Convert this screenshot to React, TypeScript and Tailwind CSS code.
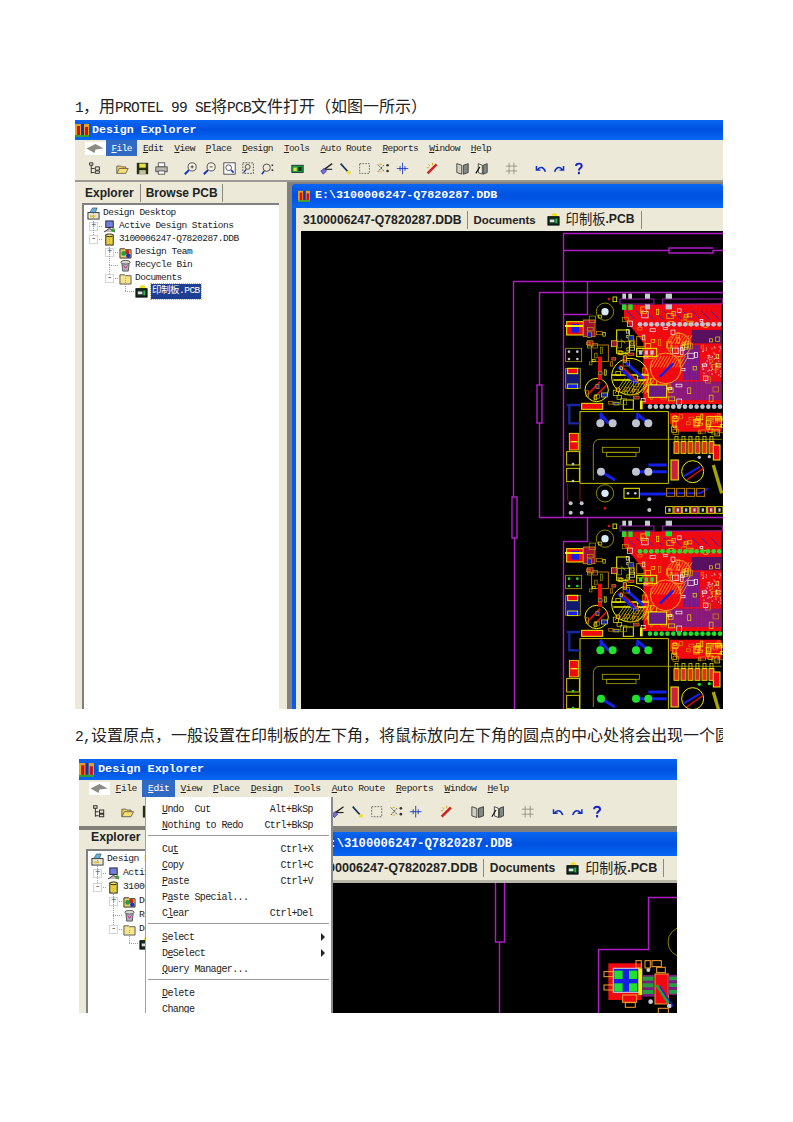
import type { ReactNode } from 'react';

const mono = "font-['Liberation_Mono','Noto_Sans_CJK_SC',monospace]";
const sans = "font-['Liberation_Sans','Noto_Sans_CJK_SC',sans-serif]";

// seeded so both boards come out the same on every run
function scatter(seed: number, n: number, x0: number, y0: number, w: number, h: number) {
  let s = seed;
  const next = () => {
    s = (s * 9301 + 49297) % 233280;
    return s / 233280;
  };
  return Array.from({ length: n }, () => ({
    x: x0 + next() * w,
    y: y0 + next() * h,
    w: 6 + next() * 14,
    h: 6 + next() * 14,
  }));
}

const range = (n: number) => Array.from({ length: n }, (_, i) => i);

const YEL = '#f4f000';
const OLV = '#a8a400';
const PUR = '#9a1fb0';
const BLU = '#1420e8';
const RED = '#f00a10';
const MAG = '#b01cc8';

function Board({ pad }: { pad: string }) {
  return (
    <g fill="none">
      {/* copper pours */}
      <path fill={RED} d="M372 75 L665 70 L665 372 L430 372 L430 190 L405 155 L372 118Z" />
      <path fill={RED} d="M510 398 L665 398 L665 455 L530 455 L510 430Z" />
      <rect x="575" y="150" width="90" height="40" fill="#5a1060" />
      <rect x="550" y="195" width="50" height="105" fill="#7a1a80" />
      <rect x="510" y="305" width="155" height="55" fill="#8a1a70" />
      <rect x="600" y="195" width="65" height="95" fill={RED} />
      {range(30).map((i) => (
        <line key={i} x1={500 + i * 5} y1={235} x2={500 + i * 5} y2={362} stroke={PUR} strokeWidth="1.6" opacity={i % 3 === 0 ? 0.8 : 0.35} />
      ))}
      {range(10).map((i) => (
        <line key={i} x1={380 + i * 28} y1={92} x2={405 + i * 28} y2={118} stroke={BLU} strokeWidth="2.5" />
      ))}
      {scatter(7, 90, 375, 80, 285, 280).map((r, i) => (
        <rect key={i} x={r.x} y={r.y} width={r.w} height={r.h} stroke={i % 3 === 0 ? '#e8e000' : i % 3 === 1 ? '#d89000' : '#ffffff'} strokeWidth="2" />
      ))}
      {scatter(13, 60, 605, 200, 58, 90).map((r, i) => (
        <path key={i} d={`M${r.x - 2} ${r.y}h4M${r.x} ${r.y - 2}v4`} stroke="#ffffff" strokeWidth="1.2" />
      ))}
      {scatter(21, 34, 515, 400, 150, 55).map((r, i) => (
        <rect key={i} x={r.x} y={r.y} width={r.w} height={r.h} stroke={i % 2 ? YEL : '#d89000'} strokeWidth="2" />
      ))}
      {/* pad rows */}
      {range(15).map((i) => (
        <circle key={i} cx={420 + i * 17} cy={133} r="7" fill={pad} />
      ))}
      {range(13).map((i) => (
        <circle key={i} cx={450 + i * 17.5} cy={380} r="7" fill={pad} />
      ))}
      {/* top connector */}
      <rect x="360" y="57" width="102" height="15" stroke={PUR} strokeWidth="3" />
      <rect x="488" y="57" width="180" height="15" stroke={PUR} strokeWidth="3" />
      <rect x="367" y="41" width="11" height="15" fill="#c8ccd4" />
      <rect x="385" y="41" width="11" height="15" fill="#c8ccd4" />
      <rect x="435" y="41" width="15" height="15" fill="#c8ccd4" />
      <rect x="497" y="41" width="19" height="15" fill="#c8ccd4" />
      <rect x="366" y="73" width="13" height="17" fill="#22dd33" />
      <rect x="385" y="73" width="13" height="17" fill="#22dd33" />
      <rect x="435" y="73" width="15" height="15" fill={pad} />
      <rect x="497" y="73" width="19" height="15" fill={pad} />
      <circle cx="327" cy="57" r="4" fill={RED} />
      <rect x="339" y="51" width="11" height="14" stroke={YEL} strokeWidth="2.5" />
      {/* mounting holes */}
      <circle cx="315" cy="95" r="26" stroke={OLV} strokeWidth="2.5" />
      <circle cx="315" cy="95" r="11" fill="#d8ecf4" />
      <circle cx="315" cy="640" r="26" stroke={OLV} strokeWidth="2.5" />
      <circle cx="315" cy="640" r="11" fill="#d8ecf4" />
      <circle cx="315" cy="685" r="4" fill={RED} />
      {/* capacitors */}
      <circle cx="390" cy="290" r="55" stroke={YEL} strokeWidth="3" />
      <path d="M335 285 H445 M340 300 H440" stroke={YEL} strokeWidth="4" />
      {range(11).map((i) => (
        <line key={i} x1={345 + i * 9} y1={340} x2={375 + i * 9} y2={295} stroke={YEL} strokeWidth="2" />
      ))}
      <path d="M355 260 L410 310 M375 245 L430 295" stroke={BLU} strokeWidth="9" />
      <path d="M360 255 L415 305" stroke={RED} strokeWidth="4" />
      <circle cx="497" cy="265" r="46" fill={RED} stroke="#f8a030" strokeWidth="3" />
      {range(11).map((i) => (
        <line key={i} x1={455 + i * 9} y1={262} x2={475 + i * 9} y2={228} stroke="#f8a030" strokeWidth="2.5" />
      ))}
      <path d="M480 290 L520 250" stroke={BLU} strokeWidth="7" />
      <circle cx="537" cy="195" r="35" stroke="#f8a030" strokeWidth="3" />
      {range(7).map((i) => (
        <line key={i} x1={507 + i * 9} y1={192} x2={522 + i * 9} y2={166} stroke="#f8a030" strokeWidth="2.5" />
      ))}
      <circle cx="290" cy="330" r="35" stroke={YEL} strokeWidth="3" />
      <path d="M262 345 L300 305 M280 355 L320 315" stroke={RED} strokeWidth="5" />
      <circle cx="578" cy="575" r="33" stroke={YEL} strokeWidth="3" />
      <path d="M550 590 L600 560" stroke={BLU} strokeWidth="6" />
      <path d="M560 600 L610 565" stroke={RED} strokeWidth="4" />
      {/* relay block */}
      <path d="M300 400 L325 430 M305 400 L300 430 M410 400 L445 430 M415 400 L408 430 M345 600 L303 575 M408 575 H500 M445 555 H500 M420 642 H500" stroke={BLU} strokeWidth="9" />
      <rect x="240" y="395" width="265" height="215" stroke={YEL} strokeWidth="2.5" />
      <path d="M280 600 V500 Q280 478 300 478 H665 M300 478" stroke={OLV} strokeWidth="2.5" />
      <rect x="307" y="502" width="111" height="15" stroke={OLV} strokeWidth="2.5" />
      <rect x="320" y="517" width="88" height="13" stroke={OLV} strokeWidth="2.5" />
      {[[301, 430], [338, 430], [408, 430], [445, 430], [303, 575], [408, 575], [445, 575]].map(([cx, cy], i) => (
        <circle key={i} cx={cx} cy={cy} r="12" fill={pad} />
      ))}
      {/* small parts down the left edge */}
      <rect x="200" y="125" width="50" height="40" fill={RED} stroke={YEL} strokeWidth="3" />
      <rect x="215" y="132" width="22" height="26" fill={BLU} />
      <rect x="195" y="135" width="60" height="6" fill={YEL} />
      <rect x="250" y="120" width="35" height="50" fill="#a01030" stroke="#d89000" strokeWidth="2.5" />
      <rect x="197" y="205" width="48" height="40" stroke={OLV} strokeWidth="2.5" />
      {[[207, 215], [232, 215], [207, 237], [232, 237]].map(([cx, cy], i) => (
        <circle key={i} cx={cx} cy={cy} r="4" fill={pad} />
      ))}
      <rect x="197" y="265" width="44" height="60" stroke={OLV} strokeWidth="2.5" fill="#101870" />
      <rect x="203" y="265" width="30" height="16" fill={RED} stroke={YEL} strokeWidth="3" />
      <rect x="203" y="312" width="30" height="14" fill={BLU} stroke={YEL} strokeWidth="2.5" />
      <rect x="275" y="195" width="50" height="50" stroke="#d89000" strokeWidth="2.5" />
      <path d="M300 230 V300" stroke={RED} strokeWidth="12" />
      <rect x="350" y="150" width="38" height="70" stroke={YEL} strokeWidth="3" />
      <path d="M350 184 H388 M362 178 L376 190" stroke={YEL} strokeWidth="2" />
      <rect x="410" y="205" width="60" height="25" stroke={YEL} strokeWidth="3" />
      {range(3).map((i) => (
        <rect key={i} x={417 + i * 17} y={211} width="10" height="13" fill={pad} />
      ))}
      <rect x="410" y="170" width="25" height="30" stroke="#d89000" strokeWidth="2.5" />
      <path d="M208 375 V430 H240 M200 375 H240" stroke="#1828a0" strokeWidth="7" />
      <rect x="245" y="370" width="63" height="18" fill={RED} stroke={YEL} strokeWidth="3" />
      <rect x="370" y="360" width="30" height="28" stroke={YEL} strokeWidth="3" />
      <rect x="420" y="362" width="8" height="26" fill={YEL} />
      <rect x="445" y="315" width="55" height="37" stroke={YEL} strokeWidth="3" fill="#6a1a80" />
      <rect x="208" y="460" width="27" height="50" fill={RED} stroke={YEL} strokeWidth="2.5" />
      <path d="M212 485 H232" stroke={YEL} strokeWidth="4" />
      <rect x="200" y="515" width="38" height="40" stroke={YEL} strokeWidth="2.5" />
      <rect x="200" y="565" width="38" height="40" stroke={YEL} strokeWidth="2.5" />
      <circle cx="219" cy="552" r="4" fill={pad} />
      <circle cx="219" cy="603" r="4" fill={pad} />
      <path d="M203 610 V660 L212 672 M240 610 V660 L245 672" stroke="#a01818" strokeWidth="2.5" />
      {[[212, 670], [245, 670], [212, 698], [245, 698], [448, 658], [448, 690]].map(([cx, cy], i) => (
        <circle key={i} cx={cx} cy={cy} r="6" fill={pad} />
      ))}
      {/* resistor row */}
      {range(6).map((i) => (
        <g key={i}>
          <rect x={522 + i * 21} y={485} width="15" height="35" fill="#e03020" stroke={YEL} strokeWidth="2.5" />
          <rect x={525 + i * 21} y={470} width="9" height="15" stroke={YEL} strokeWidth="2" />
        </g>
      ))}
      <rect x="640" y="495" width="20" height="45" fill={RED} stroke={YEL} strokeWidth="3" />
      <rect x="513" y="540" width="22" height="60" fill="#d02040" stroke={YEL} strokeWidth="3" />
      <path d="M640 555 L665 640" stroke={OLV} strokeWidth="10" />
      <rect x="372" y="625" width="46" height="30" stroke={YEL} strokeWidth="3" />
      <circle cx="384" cy="640" r="4" fill={pad} />
      <circle cx="406" cy="640" r="4" fill={pad} />
      <path d="M500 640 H600 L625 625" stroke={BLU} strokeWidth="6" />
      {range(7).map((i) => (
        <g key={i}>
          <rect x={497 + i * 25} y={680} width="22" height="20" stroke={YEL} strokeWidth="2.5" fill={i % 2 ? '#a01030' : 'none'} />
          <rect x={505 + i * 25} y={685} width="7" height="10" fill={pad} />
        </g>
      ))}
      {range(4).map((i) => (
        <rect key={i} x={500 + i * 30} y={625} width="24" height="24" stroke="#d89000" strokeWidth="2.5" />
      ))}
      {scatter(33, 46, 255, 100, 150, 280).map((r, i) => (
        <rect key={i} x={r.x} y={r.y} width={r.w} height={r.h} stroke={i % 3 === 0 ? YEL : i % 3 === 1 ? OLV : '#d89000'} fill={i % 7 === 0 ? '#a01030' : i % 7 === 3 ? '#1828a0' : 'none'} strokeWidth="2" />
      ))}
      <rect x="620" y="410" width="45" height="30" stroke={YEL} strokeWidth="2.5" />
      <circle cx="628" cy="530" r="5" fill={pad} />
      <circle cx="598" cy="532" r="5" fill={pad} />
    </g>
  );
}

// canvas of the first picture, drawn in page coordinates
function BoardCanvas() {
  return (
    <svg viewBox="301 231 422 478" className="block w-[422px] h-[478px]">
      <rect x="301" y="231" width="422" height="478" fill="#000" />
      <path
        fill="none"
        stroke={MAG}
        strokeWidth="1.4"
        d="M723 233.5H563.5V314.5H587.5V281.5M723 250.5H713V253H669V248H713M669 250.5H563.5M723 281.5H513.5V497M512 497h5v41h-5zM514.5 538V709M723 292.5H539.5V385M537 385h5v38h-5zM539.5 423V517.5H723M587.5 517.5V541.5H563.5V709M563.5 314.5V517.5"
      />
      <g transform="translate(500 280) scale(0.3333)">
        <Board pad="#c0c4d0" />
      </g>
      <g transform="translate(500 507) scale(0.3333)">
        <Board pad="#22e030" />
      </g>
    </svg>
  );
}

// the zoomed in view behind the open Edit menu
function ZoomCanvas() {
  return (
    <svg viewBox="312 883 365 130" className="block w-[365px] h-[130px]">
      <rect x="312" y="883" width="365" height="130" fill="#000" />
      <path
        fill="none"
        stroke={MAG}
        strokeWidth="1.4"
        d="M495.5 883V942H504.5V883M499.5 942V1013M677 897.5H648.5V949.5H598.5V1013"
      />
      <circle cx="683" cy="942" r="15" fill="none" stroke={OLV} strokeWidth="0.8" />
      <g transform="translate(330 720) scale(0.3333)" fill="none">
        <rect x="835" y="730" width="100" height="110" fill={RED} />
        <rect x="850" y="745" width="78" height="72" fill={BLU} stroke="#d8d8e8" strokeWidth="3" />
        <rect x="853" y="752" width="25" height="25" fill="#22e030" />
        <rect x="897" y="752" width="25" height="25" fill="#22e030" />
        <rect x="853" y="790" width="25" height="25" fill="#22e030" />
        <rect x="897" y="790" width="25" height="25" fill="#22e030" />
        <rect x="925" y="745" width="12" height="80" fill={YEL} />
        <rect x="822" y="755" width="28" height="15" stroke="#f8a030" strokeWidth="3" />
        <rect x="822" y="795" width="28" height="15" stroke="#f8a030" strokeWidth="3" />
        <rect x="878" y="825" width="42" height="22" fill={RED} stroke="#f8a030" strokeWidth="3" />
        <rect x="886" y="848" width="30" height="14" stroke="#f8a030" strokeWidth="3" />
        <rect x="918" y="722" width="16" height="22" stroke="#f8a030" strokeWidth="3" />
        <rect x="945" y="722" width="16" height="22" stroke="#f8a030" strokeWidth="3" />
        <rect x="966" y="722" width="28" height="18" stroke="#f8a030" strokeWidth="3" />
        <rect x="980" y="742" width="26" height="16" stroke="#f8a030" strokeWidth="3" />
        <rect x="938" y="765" width="35" height="65" fill="#7a1a80" />
        {[770, 790, 810].map((y) => (
          <rect key={y} x="938" y={y} width="32" height="12" fill="#22a040" />
        ))}
        <rect x="975" y="762" width="40" height="90" fill={RED} stroke="#f8a030" strokeWidth="3" />
        <rect x="1015" y="765" width="30" height="60" fill="#7a1a80" />
        {[770, 790, 810].map((y) => (
          <rect key={y} x="1018" y={y} width="25" height="11" fill="#22a040" />
        ))}
        <path d="M980 795 L1015 850" stroke="#22a040" strokeWidth="8" />
        <path d="M990 800 L1030 860" stroke={BLU} strokeWidth="4" />
        <circle cx="955" cy="750" r="6" fill="#c8ccd8" />
        <circle cx="962" cy="845" r="7" fill="#c8ccd8" />
        <circle cx="1018" cy="858" r="7" fill="#c8ccd8" />
        <rect x="985" y="865" width="30" height="16" stroke="#f8a030" strokeWidth="3" />
      </g>
    </svg>
  );
}

function AppIcon({ size }: { size: number }) {
  return (
    <svg viewBox="0 0 14 14" width={size} height={size} className="shrink-0">
      <rect x="0" y="1" width="14" height="13" fill="#e8a020" />
      <rect x="2" y="3" width="3" height="9" fill="#d01010" />
      <rect x="6" y="1" width="3" height="11" fill="#1030c0" />
      <rect x="10" y="4" width="3" height="8" fill="#d01010" />
      <rect x="0" y="12" width="14" height="2" fill="#30a030" />
    </svg>
  );
}

const toolIcons: Record<string, ReactNode> = {
  tree: <path d="M2 1h4v3H2zM4 4v10M4 8h4M4 13h4M9 6h5v4H9zM9 11h5v3H9z" fill="none" stroke="#333" strokeWidth="1.2" />,
  open: (
    <>
      <path d="M1 14V5h5l1 1h5v2" fill="#f0d050" stroke="#555" />
      <path d="M1 14l3-6h11l-3 6z" fill="#f8e070" stroke="#555" />
    </>
  ),
  save: (
    <>
      <rect x="1" y="1" width="14" height="14" fill="#243010" />
      <rect x="4" y="2" width="8" height="5" fill="#e8e040" />
      <rect x="4" y="10" width="8" height="5" fill="#c0c0a0" />
    </>
  ),
  print: (
    <>
      <rect x="4" y="1" width="8" height="5" fill="#fff" stroke="#444" />
      <rect x="1" y="6" width="14" height="6" fill="#b8b8b0" stroke="#444" />
      <rect x="4" y="11" width="8" height="4" fill="#fff" stroke="#444" />
    </>
  ),
  zoomin: (
    <>
      <circle cx="10" cy="6" r="5" fill="#f4f2e0" stroke="#333" />
      <path d="M6 10L1 15" stroke="#1030c0" strokeWidth="2.4" />
      <path d="M8 6h4M10 4v4" stroke="#333" />
    </>
  ),
  zoomout: (
    <>
      <circle cx="10" cy="6" r="5" fill="#f4f2e0" stroke="#333" />
      <path d="M6 10L1 15" stroke="#1030c0" strokeWidth="2.4" />
      <path d="M8 6h4" stroke="#333" />
    </>
  ),
  fit: (
    <>
      <rect x="1" y="1" width="14" height="14" fill="#fff" stroke="#333" />
      <circle cx="7" cy="7" r="3.5" fill="none" stroke="#333" />
      <path d="M10 10l3 3" stroke="#1030c0" strokeWidth="2" />
    </>
  ),
  area: (
    <>
      <rect x="1" y="1" width="13" height="13" fill="none" stroke="#333" strokeDasharray="2 1.5" />
      <circle cx="7" cy="6" r="3" fill="none" stroke="#333" />
      <path d="M5 9l-3 4" stroke="#1030c0" strokeWidth="1.6" />
    </>
  ),
  point: (
    <>
      <circle cx="7" cy="7" r="4.5" fill="none" stroke="#333" />
      <path d="M4 11l-3 4" stroke="#1030c0" strokeWidth="1.8" />
      <path d="M14 3v2M14 9v2" stroke="#333" strokeWidth="2" />
    </>
  ),
  chip: (
    <>
      <rect x="1" y="4" width="14" height="9" fill="#20a040" stroke="#123" />
      <rect x="3" y="7" width="4" height="4" fill="#e8e040" />
      <rect x="9" y="6" width="4" height="5" fill="#0a3010" />
    </>
  ),
  cut: (
    <>
      <path d="M15 2L4 10" stroke="#222" strokeWidth="1.6" />
      <path d="M15 9H6" stroke="#222" strokeWidth="1.4" />
      <path d="M1 11l4-3 3 3-4 4z" fill="#7070d8" stroke="#4040a0" />
    </>
  ),
  wire: (
    <>
      <path d="M2 2l9 10" stroke="#123060" strokeWidth="2" />
      <circle cx="12" cy="13" r="2.5" fill="#f0e040" />
    </>
  ),
  dots: <rect x="2" y="2" width="12" height="12" fill="none" stroke="#555" strokeDasharray="2 1.5" />,
  swap: (
    <>
      <path d="M1 3l8 9M1 12l8-9" stroke="#333" strokeDasharray="2 1" />
      <circle cx="13" cy="4" r="1.6" fill="#333" />
      <circle cx="13" cy="11" r="1.6" fill="#333" />
      <path d="M3 3h3M3 12h3" stroke="#e0c020" strokeWidth="1.4" />
    </>
  ),
  cross: <path d="M8 1v14M1 8h14M5 5v6M11 5v6" stroke="#1030c0" fill="none" />,
  wand: (
    <>
      <path d="M2 14L13 3" stroke="#d02020" strokeWidth="3" />
      <path d="M3 3l2 2M8 1v3M1 7h3" stroke="#d0b020" strokeWidth="1.2" />
    </>
  ),
  book: (
    <>
      <path d="M1 2l6 2v11l-6-2z" fill="#d0d0c0" stroke="#333" />
      <path d="M15 2l-6 2v11l6-2z" fill="#808880" stroke="#333" />
    </>
  ),
  book2: (
    <>
      <path d="M4 2l5 2v11l-5-2z" fill="#f0f0e0" stroke="#333" />
      <path d="M15 2l-5 2v11l5-2z" fill="#808880" stroke="#333" />
      <path d="M1 14L6 6" stroke="#111" strokeWidth="1.4" />
    </>
  ),
  grid: <path d="M5 1v14M11 1v14M1 5h14M1 11h14" stroke="#8a8a80" fill="none" />,
  undo: <path d="M3 5v5h5M4 10c3-5 8-4 10 2" fill="none" stroke="#1030c0" strokeWidth="1.8" />,
  redo: <path d="M13 5v5H8M12 10c-3-5-8-4-10 2" fill="none" stroke="#1030c0" strokeWidth="1.8" />,
  help: <path d="M5 5c0-4 7-4 7 0 0 2.5-3.5 2.5-3.5 5.5M8.5 12v3" fill="none" stroke="#1a20c8" strokeWidth="2.4" />,
};

// [icon, left edge measured on the first picture, relative to its left side]
const toolbar: [string, number][] = [
  ['tree', 13], ['open', 41], ['save', 61], ['print', 80], ['zoomin', 109], ['zoomout', 128],
  ['fit', 148], ['area', 167], ['point', 186], ['chip', 216], ['cut', 245], ['wire', 264],
  ['dots', 283], ['swap', 302], ['cross', 321], ['wand', 351], ['book', 381], ['book2', 400],
  ['grid', 430], ['undo', 459], ['redo', 478], ['help', 497],
];

function Toolbar({ k }: { k: number }) {
  const size = 13 * k;
  return (
    <div className="flex items-center h-full">
      {toolbar.map(([name, x], i) => {
        const prev = i === 0 ? 0 : toolbar[i - 1][1] * k + size;
        return (
          <svg key={name} viewBox="0 0 16 16" width={size} height={size} className="shrink-0" style={{ marginLeft: x * k - prev }}>
            {toolIcons[name]}
          </svg>
        );
      })}
    </div>
  );
}

function TreeIcon({ name }: { name: string }) {
  return (
    <svg viewBox="0 0 14 14" width="13" height="13" className="shrink-0">
      {name === 'desktop' && (
        <>
          <rect x="1" y="6" width="12" height="7" fill="#e8e8d8" stroke="#333" />
          <path d="M3 6l3-5h5l-2 5z" fill="#60b0e0" stroke="#333" strokeWidth="0.6" />
          <rect x="3" y="9" width="6" height="2" fill="#e0c040" />
        </>
      )}
      {name === 'stations' && (
        <>
          <rect x="3" y="1" width="8" height="7" fill="#7080e0" stroke="#223" />
          <path d="M1 13l6-4 6 4" fill="#c0c0c0" stroke="#333" />
          <circle cx="11" cy="11" r="2" fill="#40a040" />
        </>
      )}
      {name === 'db' && (
        <>
          <rect x="3" y="2" width="8" height="11" fill="#e8d040" stroke="#222" />
          <ellipse cx="7" cy="2.5" rx="4" ry="1.5" fill="#f4e060" stroke="#222" />
        </>
      )}
      {name === 'team' && (
        <>
          <path d="M1 3h5l1 1h6v9H1z" fill="#e8d060" stroke="#333" />
          <circle cx="5" cy="8" r="2.6" fill="#20a040" />
          <circle cx="9" cy="6.5" r="2.4" fill="#d02020" />
          <circle cx="10" cy="10.5" r="2.4" fill="#2030c0" />
        </>
      )}
      {name === 'bin' && (
        <>
          <path d="M3 4h8l-1 9H4z" fill="#b0b0c0" stroke="#555" />
          <ellipse cx="7" cy="3.5" rx="5" ry="2" fill="#d8d8d8" stroke="#555" />
          <path d="M5 7l2 3 2-3" stroke="#d02080" fill="none" />
        </>
      )}
      {name === 'folder' && <path d="M1 3h5l1 1h6v9H1z" fill="#f4e48c" stroke="#555" />}
      {name === 'pcb' && (
        <>
          <circle cx="8" cy="3" r="3" fill="#f0e020" />
          <rect x="1" y="4" width="12" height="9" fill="#103020" stroke="#000" />
          <rect x="3" y="7" width="5" height="3" fill="#e0e0e0" />
          <rect x="9" y="6" width="2" height="5" fill="#20c040" />
        </>
      )}
    </svg>
  );
}

const treeRows = [
  { lvl: 0, icon: 'desktop', label: 'Design Desktop' },
  { lvl: 1, icon: 'stations', label: 'Active Design Stations', exp: '+' },
  { lvl: 1, icon: 'db', label: '3100006247-Q7820287.DDB', exp: '-' },
  { lvl: 2, icon: 'team', label: 'Design Team', exp: '+' },
  { lvl: 2, icon: 'bin', label: 'Recycle Bin' },
  { lvl: 2, icon: 'folder', label: 'Documents', exp: '-' },
  { lvl: 3, icon: 'pcb', label: '印制板.PCB', selected: true },
];

const indent = ['pl-[3px]', 'pl-[19px]', 'pl-[35px]', 'pl-[51px]'];

function Tree({ rowClass, textClass }: { rowClass: string; textClass: string }) {
  return (
    <div className={`${mono} ${textClass} text-[#222]`}>
      {treeRows.map((row) => (
        <div key={row.label} className={`flex items-center ${rowClass} ${indent[row.lvl]}`}>
          <span className="relative flex items-center shrink-0">
            {row.lvl > 0 && (
              <>
                <span className="absolute -left-[10px] -top-[7px] h-[13px] border-l border-dotted border-gray-400" />
                <span className="absolute -left-[10px] top-[6px] w-[9px] border-t border-dotted border-gray-400" />
              </>
            )}
            {row.exp && (
              <span className="absolute -left-[14px] top-[2px] w-[9px] h-[9px] border border-gray-300 bg-white flex items-center justify-center text-[9px] leading-none text-[#444]">
                {row.exp}
              </span>
            )}
            <TreeIcon name={row.icon} />
          </span>
          <span
            className={
              row.selected
                ? 'ml-[3px] px-[1px] bg-[#1c3f94] text-white outline-1 outline-dotted outline-[#c8b060]'
                : 'ml-[3px] whitespace-nowrap'
            }
          >
            {row.label}
          </span>
        </div>
      ))}
    </div>
  );
}

const menuNames = ['File', 'Edit', 'View', 'Place', 'Design', 'Tools', 'Auto Route', 'Reports', 'Window', 'Help'];

function MenuBar({ active, itemClass }: { active: string; itemClass: string }) {
  return (
    <div className="flex items-stretch h-full">
      {menuNames.map((name) => (
        <span
          key={name}
          className={`flex items-center whitespace-nowrap pt-[2px] ${itemClass} ${name === active ? 'bg-[#316ac5] text-white' : 'text-[#222]'}`}
        >
          <span className="underline underline-offset-1">{name[0]}</span>
          {name.slice(1)}
        </span>
      ))}
    </div>
  );
}

function Chevron() {
  return (
    <div className="bg-white flex items-center justify-center w-[21px] h-[13px] shrink-0">
      <svg viewBox="0 0 20 10" width="19" height="9">
        <path d="M0 5L10 0L19 5L10 6L9 10Z" fill="#8c8c84" />
      </svg>
    </div>
  );
}

function TitleBar({ className, children }: { className: string; children: ReactNode }) {
  return (
    <div className={`flex items-center bg-gradient-to-b from-[#0a66f0] via-[#0050e0] to-[#0a68f4] text-white font-bold ${mono} ${className}`}>
      {children}
    </div>
  );
}

function DocTabs({ firstClass, docClass, cjkClass, padClass }: { firstClass: string; docClass: string; cjkClass: string; padClass: string }) {
  return (
    <div className={`flex items-center h-full ${sans} font-bold text-[#222]`}>
      <span className={`${firstClass} ${padClass} pr-[5px] border-r border-[#8a8a80] h-[18px] leading-[18px]`}>3100006247-Q7820287.DDB</span>
      <span className={`${docClass} pl-[6px] pr-[11px] h-[18px] leading-[18px]`}>Documents</span>
      <span className="flex items-center h-[18px] pr-[6px] border-r border-[#8a8a80]">
        <TreeIcon name="pcb" />
        <span className={`ml-[6px] font-normal ${cjkClass}`}>印制板</span>
        <span className={firstClass}>.PCB</span>
      </span>
    </div>
  );
}

function FirstShot() {
  return (
    <div className="w-[648px] h-[589px] overflow-hidden bg-[#ece9d8] flex flex-col">
      <TitleBar className="h-[20px] text-[11.6px] shrink-0">
        <AppIcon size={14} />
        <span className="ml-[3px]">Design Explorer</span>
      </TitleBar>
      <div className={`flex h-[16px] shrink-0 items-center pl-[10px] ${mono} text-[9.5px] tracking-[-0.6px]`}>
        <Chevron />
        <MenuBar active="File" itemClass="px-[5.5px]" />
      </div>
      <div className="h-[26px] shrink-0 border-b-2 border-[#9a9a90]">
        <Toolbar k={1} />
      </div>
      <div className="flex-1 flex min-h-0">
        <div className="w-[212px] shrink-0 pl-[7px] flex flex-col">
          <div className={`h-[21px] flex items-center ${sans} text-[12px] font-bold text-[#222]`}>
            <span className="pl-[3px] pr-[6px] border-r border-[#8a8a80]">Explorer</span>
            <span className="pl-[5px] pr-[4px] border-r border-[#8a8a80]">Browse PCB</span>
          </div>
          <div className="flex-1 w-[197px] bg-white border-t-2 border-l-2 border-[#808080] pt-[2px]">
            <Tree rowClass="h-[13px]" textClass="text-[9.5px] tracking-[-0.5px]" />
          </div>
        </div>
        <div className="flex-1 bg-[#808080] pl-[5px] pt-[2px] min-w-0">
          <div className="h-full rounded-t-[4px] bg-[#0a5ae6] pl-[4px] flex flex-col">
            <TitleBar className="h-[24px] shrink-0 text-[11.7px] -ml-[4px] pl-[6px] rounded-t-[4px]">
              <AppIcon size={12} />
              <span className="ml-[5px]">E:\3100006247-Q7820287.DDB</span>
            </TitleBar>
            <div className="h-[23px] shrink-0 bg-[#ece9d8]">
              <DocTabs firstClass="text-[12.2px]" docClass="text-[11.4px]" cjkClass="text-[13.3px]" padClass="pl-[7px]" />
            </div>
            <div className="flex-1 bg-[#ece9d8] pl-[5px] min-h-0">
              <BoardCanvas />
            </div>
          </div>
        </div>
      </div>
    </div>
  );
}

type MenuRow = { text?: [string, string, string]; key?: string; arrow?: boolean; sep?: boolean };

const editMenu: MenuRow[] = [
  { text: ['', 'U', 'ndo  Cut'], key: 'Alt+BkSp' },
  { text: ['', 'N', 'othing to Redo'], key: 'Ctrl+BkSp' },
  { sep: true },
  { text: ['Cu', 't', ''], key: 'Ctrl+X' },
  { text: ['', 'C', 'opy'], key: 'Ctrl+C' },
  { text: ['', 'P', 'aste'], key: 'Ctrl+V' },
  { text: ['P', 'a', 'ste Special...'] },
  { text: ['C', 'l', 'ear'], key: 'Ctrl+Del' },
  { sep: true },
  { text: ['', 'S', 'elect'], arrow: true },
  { text: ['D', 'e', 'Select'], arrow: true },
  { text: ['', 'Q', 'uery Manager...'] },
  { sep: true },
  { text: ['', 'D', 'elete'] },
  { text: ['C', 'h', 'ange'] },
];

function EditMenu() {
  return (
    <div className={`absolute left-[66px] top-[38px] w-[188px] bg-white border-l border-[#a0a0a0] border-r-2 border-r-[#8a8a8a] pt-[4px] ${mono} text-[10px] tracking-[-0.6px] text-[#222] whitespace-pre`}>
      {editMenu.map((row, i) =>
        row.sep ? (
          <div key={i} className="h-[8px] pt-[2px] pl-[2px] pr-[2px]">
            <div className="border-t border-[#9a9a9a]" />
          </div>
        ) : (
          <div key={i} className="relative h-[16px] pl-[16px] pr-[18px] flex items-center justify-between">
            <span>
              {row.text![0]}
              <span className="underline underline-offset-1">{row.text![1]}</span>
              {row.text![2]}
            </span>
            {row.key && <span>{row.key}</span>}
            {row.arrow && <span className="absolute right-[6px] w-0 h-0 border-y-[4px] border-y-transparent border-l-[4px] border-l-[#222]" />}
          </div>
        ),
      )}
    </div>
  );
}

function SecondShot() {
  return (
    <div className="relative ml-[4px] w-[598px] h-[254px] overflow-hidden bg-[#ece9d8] flex flex-col">
      <TitleBar className="h-[21px] text-[11.8px] shrink-0">
        <AppIcon size={15} />
        <span className="ml-[4px]">Design Explorer</span>
      </TitleBar>
      <div className={`flex h-[17px] shrink-0 items-center pl-[10px] ${mono} text-[9.7px] tracking-[-0.5px]`}>
        <Chevron />
        <MenuBar active="Edit" itemClass="px-[5.6px]" />
      </div>
      <div className="h-[33px] shrink-0 border-b-[4px] border-[#808078]">
        <Toolbar k={1.03} />
      </div>
      <div className="flex-1 flex min-h-0">
        <div className="w-[219px] shrink-0 pl-[7px] flex flex-col">
          <div className={`h-[19px] flex items-center pl-[5px] pb-[5px] ${sans} text-[12.2px] font-bold text-[#222]`}>Explorer</div>
          <div className="flex-1 bg-white border-t-2 border-l-2 border-[#808080] pt-[1px]">
            <Tree rowClass="h-[14px]" textClass="text-[9.7px] tracking-[-0.5px]" />
          </div>
        </div>
        <div className="flex-1 bg-[#808080] pl-[5px] pt-[2px] min-w-0">
          <div className="h-full flex flex-col pl-[4px] bg-[#0a5ae6]">
            <TitleBar className="h-[24px] shrink-0 text-[12.2px] pl-[14px] -ml-[4px]">
              <span className="ml-[5px]">E:\3100006247-Q7820287.DDB</span>
            </TitleBar>
            <div className="h-[27px] shrink-0 bg-[#ece9d8] border-b-[3px] border-[#b8b6a8]">
              <DocTabs firstClass="text-[12.6px]" docClass="text-[12px]" cjkClass="text-[14px]" padClass="pl-[7px]" />
            </div>
            <div className="flex-1 bg-[#ece9d8] pl-[5px] min-h-0">
              <ZoomCanvas />
            </div>
          </div>
        </div>
      </div>
      <EditMenu />
    </div>
  );
}

const latin = `${mono} text-[14.5px] tracking-[-0.7px]`;

export default function App() {
  return (
    <div className="w-[793px] h-[1122px] bg-white pl-[75px] pt-[96px] overflow-hidden text-[16px] text-[#222] font-['Noto_Sans_CJK_SC',sans-serif]">
      <p className="h-[24px] leading-[18px] whitespace-pre">
        <span className={latin}>1</span>，用<span className={latin}>PROTEL 99 SE</span>将<span className={latin}>PCB</span>文件打开（如图一所示）
      </p>
      <FirstShot />
      <p className="w-[648px] mt-[16px] h-[34px] leading-[18px] whitespace-pre overflow-hidden">
        <span className={latin}>2,</span>设置原点，一般设置在印制板的左下角，将鼠标放向左下角的圆点的中心处将会出现一个圆
      </p>
      <SecondShot />
    </div>
  );
}
